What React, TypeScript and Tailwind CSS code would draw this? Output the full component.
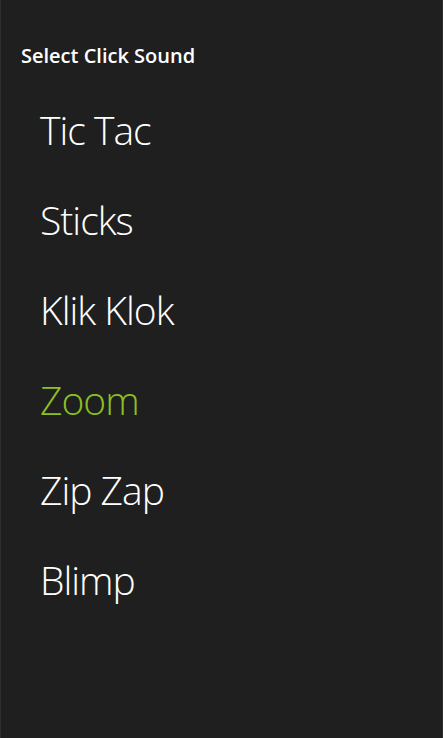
export default function App() {
  const items = ["Tic Tac", "Sticks", "Klik Klok", "Zoom", "Zip Zap", "Blimp"];
  const selected = "Zoom";
  return (
    <div className="w-[443px] h-[738px] bg-[#1f1f1f] border-x border-[#2e2e2e] overflow-hidden" style={{ fontFamily: '"Open Sans", "Noto Sans", sans-serif' }}>
      <div className="pl-[20px] pt-[42px] text-[20px] leading-[28px] font-semibold text-white tracking-[0px]">Select Click Sound</div>
      <div className="flex flex-col pl-[39px] pt-[32px]">
        {items.map((t) => (
          <div
            key={t}
            className={`h-[90px] text-[39px] leading-[56px] font-light tracking-[-1px] ${t === selected ? "text-[#8cbf26]" : "text-white"}`}
          >
            {t}
          </div>
        ))}
      </div>
    </div>
  );
}
